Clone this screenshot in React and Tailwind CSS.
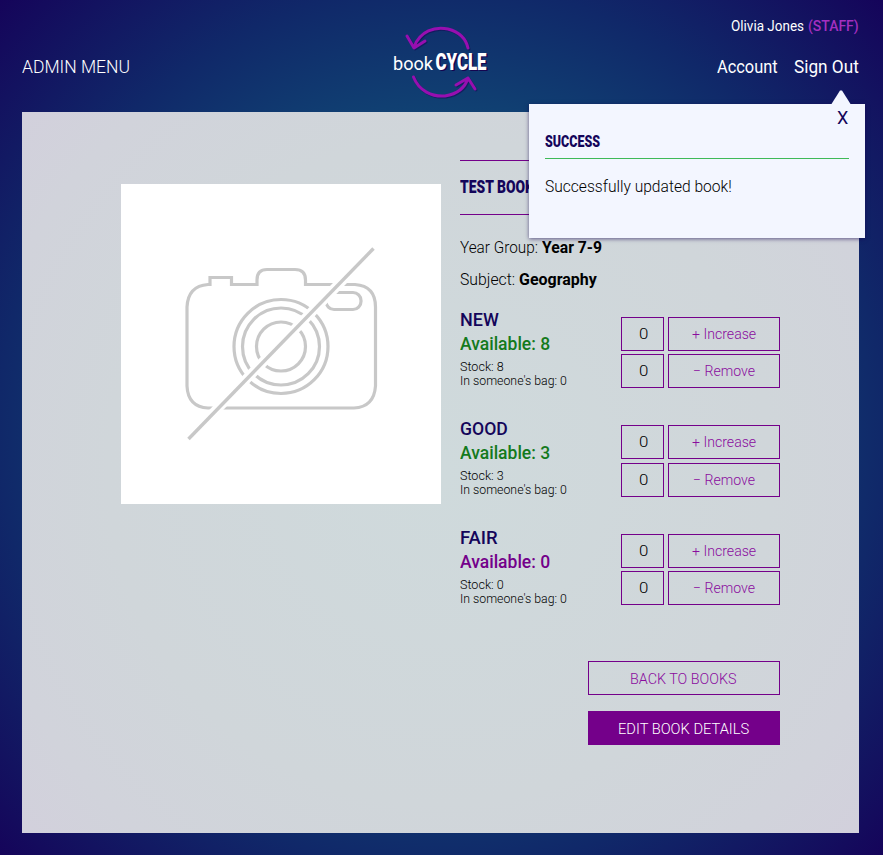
import { useLayoutEffect, useRef, useState } from "react";

// Horizontally condenses a label so that it takes exactly `width` pixels.
function Fit({ width, className = "", children }) {
  const ref = useRef(null);
  const [scale, setScale] = useState(1);
  useLayoutEffect(() => {
    setScale(width / ref.current.offsetWidth);
  }, [width]);
  return (
    <span className={`inline-block shrink-0 whitespace-nowrap ${className}`} style={{ width }}>
      <span ref={ref} className="inline-block origin-left" style={{ transform: `scaleX(${scale})` }}>
        {children}
      </span>
    </span>
  );
}

function Logo() {
  return (
    <svg width="100" height="78" viewBox="390 24 100 78" fill="none" className="block overflow-visible">
      <g transform="translate(1 1)" stroke="#160650" strokeOpacity="0.5" strokeWidth="3" strokeLinecap="round" strokeLinejoin="round">
        <path d="M414 47C420 31 435 26 448 29C459 32 466 39 468 48M407 36L414 48L425 41" />
        <path d="M413.500 77C419 91 432 97 445 96C457 94 465 88 468 78M456 85L468 78L475 89" />
      </g>
      <g stroke="#970fb0" strokeWidth="3" strokeLinecap="round" strokeLinejoin="round">
        <path d="M414 47C420 31 435 26 448 29C459 32 466 39 468 48M407 36L414 48L425 41" />
        <path d="M413.500 77C419 91 432 97 445 96C457 94 465 88 468 78M456 85L468 78L475 89" />
      </g>
      <g fill="#150550">
        <text x="437" y="71" fontFamily="Roboto, sans-serif" fontWeight="900" fontSize="24.500" textLength="51" lengthAdjust="spacingAndGlyphs">CYCLE</text>
      </g>
      <g fill="#fff">
        <text x="393" y="69.500" fontFamily="Roboto, sans-serif" fontWeight="400" fontSize="18.500" textLength="40" lengthAdjust="spacingAndGlyphs">book</text>
        <text x="435.500" y="69.500" fontFamily="Roboto, sans-serif" fontWeight="900" fontSize="24.500" textLength="51" lengthAdjust="spacingAndGlyphs">CYCLE</text>
      </g>
    </svg>
  );
}

function NoPhoto() {
  return (
    <svg width="320" height="320" viewBox="121 184 320 320" fill="none" className="block">
      <g stroke="#c8c8c8" strokeWidth="3.200">
        <path d="M210 284.500V277.500H231.500V284.500H257V280Q257 269.500 267 269.500H295Q305.500 269.500 305.500 280V284.500H355Q375.500 286 375.500 307V386Q374 407 354 408H208Q188 407 187 386V307Q188 286 208 284.500Z" />
        <circle cx="281" cy="346.500" r="47" />
        <circle cx="281" cy="346.500" r="38.500" />
        <circle cx="281" cy="346.500" r="24.500" />
        <rect x="326" y="292.500" width="35" height="17" rx="8" />
      </g>
      <path d="M186 441L376 246" stroke="#fff" strokeWidth="10" />
      <path d="M188.500 439L373.500 248.500" stroke="#c8c8c8" strokeWidth="3.400" />
    </svg>
  );
}

function AdjustRow({ label, width }) {
  return (
    <div className="flex h-[34px] gap-1">
      <div className="flex w-[43px] items-center justify-center border border-[#74008a] pl-0.5 text-[15px] font-light">
        <Fit width={9}>0</Fit>
      </div>
      <div className="flex w-28 items-center justify-center border border-[#74008a] text-[15px] font-light text-[#8a0c9e]">
        <Fit width={width}>{label}</Fit>
      </div>
    </div>
  );
}

function Condition({ name, nameWidth, count, gap, height, offset, color }) {
  return (
    <div className="flex justify-between" style={{ height }}>
      <div className="flex flex-col" style={{ paddingTop: offset }}>
        <div className="h-6 text-[18px] leading-6 font-medium text-[#14055a]"><Fit width={nameWidth}>{name}</Fit></div>
        <div className={`h-6 text-[18px] leading-6 font-medium ${color}`}><Fit width={90.5}>Available: {count}</Fit></div>
        <div className="mt-1 h-3.5 text-[13px] leading-3.5 font-light"><Fit width={43.5}>Stock: {count}</Fit></div>
        <div className="h-3.5 text-[13px] leading-3.5 font-light"><Fit width={107}>In someone's bag: 0</Fit></div>
      </div>
      <div className="flex flex-col pt-[9px]" style={{ gap }}>
        <AdjustRow label="+ Increase" width={64} />
        <AdjustRow label="− Remove" width={62} />
      </div>
    </div>
  );
}

function Notice() {
  return (
    <div className="absolute top-[104px] left-[529px] flex h-[134px] w-[336px] flex-col bg-[#f3f6ff] px-4 shadow-[0_1px_4px_#16065099]">
      <svg width="20" height="15" viewBox="0 0 20 15" className="absolute -top-3.5 right-3.5 block">
        <path d="M0 15L0.500 14L9 0.500H11L19.500 14L20 15Z" fill="#f3f6ff" />
      </svg>
      <div className="flex h-7 justify-end text-[18px] leading-7 text-[#14055a]"><Fit width={11} className="mr-px">X</Fit></div>
      <div className="h-[27px] border-b border-[#3fba58] text-[17px] leading-[19px] font-black text-[#14055a]"><Fit width={55}>SUCCESS</Fit></div>
      <div className="pt-4 text-[16px] leading-6 font-light"><Fit width={187}>Successfully updated book!</Fit></div>
    </div>
  );
}

export default function App() {
  return (
    <div className="relative flex h-[855px] w-[883px] flex-col overflow-hidden bg-[radial-gradient(circle_at_center,#0c7e8c_0%,#103f72_53%,#102869_72%,#15045a_100%)] px-[22px] font-['Roboto',sans-serif] text-black">
      <header className="flex h-28 items-start justify-between pr-0.5 text-white">
        <div className="w-[368px] pt-[55px] text-[18px] leading-6 font-light"><Fit width={108}>ADMIN MENU</Fit></div>
        <div className="pt-6"><Logo /></div>
        <div className="flex w-[369px] flex-col items-end">
          <div className="flex h-[25px] gap-1 pt-[15px] text-[14.5px] leading-6">
            <Fit width={73.5}>Olivia Jones</Fit>
            <Fit width={51} className="font-medium text-[#a42fc0]">(STAFF)</Fit>
          </div>
          <div className="flex gap-4 pt-[30px] text-[18px] leading-6">
            <Fit width={61}>Account</Fit>
            <Fit width={65}>Sign Out</Fit>
          </div>
        </div>
      </header>

      <main className="flex h-[721px] w-[837px] items-start bg-[radial-gradient(circle_at_center,#cfdadc_0%,#d0d6da_60%,#d1d3db_85%,#d2d0dc_100%)] pt-12 pl-[99px]">
        <div className="mt-6 size-80 bg-white"><NoPhoto /></div>
        <section className="ml-[19px] flex w-80 flex-col">
          <div className="h-[55px] border-y border-[#74008a] text-[18px] leading-[51px] font-black text-[#14055a]"><Fit width={74}>TEST BOOK</Fit></div>
          <div className="mt-[17px] flex h-8 items-center gap-1 text-[16.5px]">
            <Fit width={78} className="font-light">Year Group:</Fit>
            <Fit width={60} className="font-bold">Year 7-9</Fit>
          </div>
          <div className="flex h-8 items-center gap-[3px] text-[16.5px]">
            <Fit width={55.5} className="font-light">Subject:</Fit>
            <Fit width={77.5} className="font-bold">Geography</Fit>
          </div>
          <div className="mt-3 flex flex-col">
            <Condition name="NEW" nameWidth={39} count={8} gap={3} height={108} offset={0} color="text-[#147a1c]" />
            <Condition name="GOOD" nameWidth={48} count={3} gap={4} height={109} offset={1} color="text-[#147a1c]" />
            <Condition name="FAIR" nameWidth={38} count={0} gap={3} height={100} offset={1} color="text-[#74008a]" />
          </div>
          <div className="mt-9 flex flex-col items-end gap-4 text-[15px] font-light">
            <div className="flex h-[34px] w-48 items-center justify-center border border-[#74008a] pt-0.5 pr-0.5 text-[#8a0c9e]"><Fit width={107}>BACK TO BOOKS</Fit></div>
            <div className="flex h-[34px] w-48 items-center justify-center bg-[#74008a] pt-0.5 pr-0.5 text-white"><Fit width={131}>EDIT BOOK DETAILS</Fit></div>
          </div>
        </section>
      </main>
      <Notice />
    </div>
  );
}
